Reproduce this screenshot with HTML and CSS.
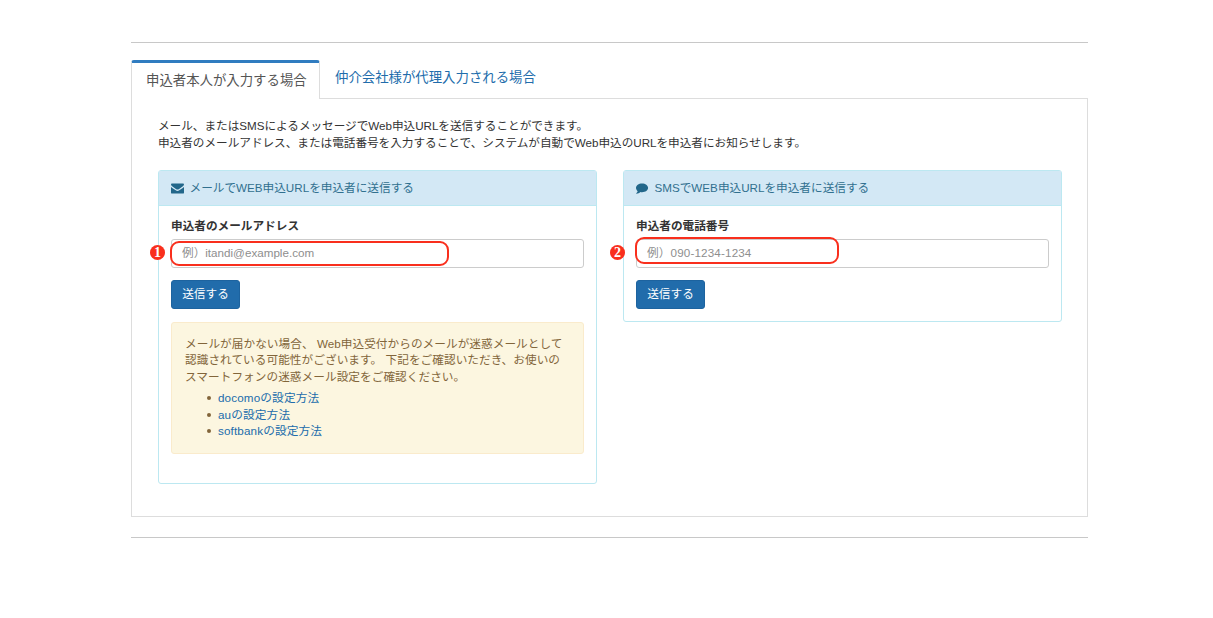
FILE: index.html
```html
<!DOCTYPE html>
<html lang="ja">
<head>
    <meta charset="UTF-8">
    <meta name="viewport" content="width=device-width, initial-scale=1.0">
    <title>Web申込</title>
    <link rel="stylesheet" href="styles.css">
</head>
<body>
    <div class="container">
        <hr class="divider">
        <ul class="tabs">
            <li class="tab active"><a href="#self">申込者本人が入力する場合</a></li>
            <li class="tab"><a href="#agent">仲介会社様が代理入力される場合</a></li>
        </ul>
        <div class="tab-content" id="self">
            <p class="lead">メール、またはSMSによるメッセージでWeb申込URLを送信することができます。<br>申込者のメールアドレス、または電話番号を入力することで、システムが自動でWeb申込のURLを申込者にお知らせします。</p>
            <div class="row">
                <div class="panel panel-mail">
                    <div class="panel-heading">
                        <svg class="icon" viewBox="0 0 14 14">
                            <path d="M1.200 1.600h11.600c.7 0 1.200.5 1.200 1.200 0 .8-.6 1.300-1.200 1.800L8.300 7.700c-.5.3-.8.5-1.300.5s-.8-.2-1.300-.5L1.200 4.600C.6 4.100 0 3.600 0 2.800c0-.7.5-1.200 1.200-1.200z"/>
                            <path d="M0 5.500c.3.300.6.500.9.700l4.200 2.800c.6.400 1.200.7 1.900.7s1.300-.3 1.900-.7l4.200-2.800c.3-.2.600-.4.900-.7v5.700c0 .8-.5 1.300-1.300 1.300H1.300c-.8 0-1.300-.5-1.300-1.300z"/>
                        </svg>
                        <span>メールでWEB申込URLを申込者に送信する</span>
                    </div>
                    <form class="panel-body">
                        <label for="email">申込者のメールアドレス</label>
                        <div class="field">
                            <input type="text" id="email" placeholder="例）itandi@example.com">
                            <span class="marker marker-mail"></span>
                            <span class="badge badge-mail">1</span>
                        </div>
                        <button type="button">送信する</button>
                        <div class="alert">
                            <p>メールが届かない場合、 Web申込受付からのメールが迷惑メールとして<br>認識されている可能性がございます。 下記をご確認いただき、お使いの<br>スマートフォンの迷惑メール設定をご確認ください。</p>
                            <ul>
                                <li><a href="#">docomoの設定方法</a></li>
                                <li><a href="#">auの設定方法</a></li>
                                <li><a href="#">softbankの設定方法</a></li>
                            </ul>
                        </div>
                    </form>
                </div>
                <div class="panel panel-sms">
                    <div class="panel-heading">
                        <svg class="icon" viewBox="0 0 14 14">
                            <path d="M6.500 1.500c3.700 0 6.500 2.100 6.500 4.800S10.200 11.100 6.500 11.100c-.6 0-1.200 0-1.700-.2C3.500 12.100 2.100 12.500.6 12.700c-.3 0-.5-.3-.3-.6.700-.7 1.200-1.300 1.500-2.200C.7 9 0 7.700 0 6.300 0 3.600 2.800 1.500 6.500 1.500z"/>
                        </svg>
                        <span>SMSでWEB申込URLを申込者に送信する</span>
                    </div>
                    <form class="panel-body">
                        <label for="tel">申込者の電話番号</label>
                        <div class="field">
                            <input type="text" id="tel" placeholder="例）090-1234-1234">
                            <span class="marker marker-sms"></span>
                            <span class="badge badge-sms">2</span>
                        </div>
                        <button type="button">送信する</button>
                    </form>
                </div>
            </div>
        </div>
        <hr class="divider">
    </div>
</body>
</html>
```
FILE: styles.css
```css
* {
    box-sizing: border-box;
}
body {
    margin: 0;
    background: #fff;
    color: #333;
    font-family: "Liberation Sans", "Noto Sans CJK JP", sans-serif;
    font-size: 11.65px;
    line-height: 16.7px;
}
a {
    color: #216cab;
    text-decoration: none;
}
.container {
    width: 957px;
    margin-left: 131px;
    padding-top: 42px;
}
.divider {
    height: 1px;
    margin: 0;
    border: none;
    background: #c8c8c8;
}
.tabs {
    display: flex;
    align-items: flex-start;
    height: 38px;
    margin: 17px 0 0;
    padding: 0;
    list-style: none;
    font-size: 13.4px;
}
.tab {
    height: 38px;
    padding: 10px 15px 0;
}
.tab.active {
    position: relative;
    width: 189px;
    height: 39px;
    padding: 10px 0 0 14px;
    background: #fff;
    border: 1px solid #ddd;
    border-top: 3px solid #307cc0;
    border-bottom: none;
    border-radius: 3px 3px 0 0;
    white-space: nowrap;
}
.tab.active a {
    color: #555;
}
.tab-content {
    height: 419px;
    padding: 19px 26px 0;
    border: 1px solid #ddd;
    margin-bottom: 20px;
}
.lead {
    margin: 0 0 18.600px;
    letter-spacing: -0.03px;
    white-space: nowrap;
}
.row {
    display: flex;
    align-items: flex-start;
    gap: 26px;
}
.panel {
    flex: none;
    width: 439px;
    border: 1px solid #bce8f1;
    border-radius: 3px;
}
.panel-mail {
    height: 314px;
}
.panel-sms {
    height: 152px;
}
.panel-heading {
    display: flex;
    align-items: center;
    gap: 5.500px;
    height: 35px;
    padding-left: 12px;
    background: #d3e8f5;
    border-bottom: 1px solid #bce8f1;
    color: #31708f;
}
.icon {
    width: 13px;
    height: 13px;
    fill: #22678a;
}
.panel-body {
    padding: 12px 12px 0;
}
label {
    display: block;
    margin-bottom: 4px;
    font-weight: bold;
}
.field {
    position: relative;
}
input {
    display: block;
    width: 100%;
    height: 29px;
    padding: 0 10px 2px;
    border: 1px solid #ccc;
    border-radius: 3px;
    font: inherit;
}
input::placeholder {
    color: #8e8e8e;
    opacity: 1;
}
#tel {
    letter-spacing: 0.15px;
}
/* red callouts over the input fields */
.marker {
    position: absolute;
    left: -1px;
    border: 2px solid #f92f1d;
    border-radius: 9px;
}
.marker-mail {
    top: 2px;
    width: 279px;
    height: 25px;
}
.marker-sms {
    top: -2px;
    width: 204px;
    height: 27px;
}
.badge {
    position: absolute;
    top: 6px;
    width: 15px;
    height: 15px;
    border-radius: 50%;
    background: #f92f1d;
    color: #fff;
    font-family: "Liberation Serif", serif;
    font-size: 14px;
    font-weight: bold;
    line-height: 15px;
    text-align: center;
}
.badge-mail {
    left: -21px;
}
.badge-sms {
    left: -26px;
}
button {
    display: block;
    width: 69px;
    height: 29px;
    margin-top: 12px;
    padding: 0;
    border: 1px solid #1d639f;
    border-radius: 3px;
    background: #216cab;
    color: #fff;
    font: inherit;
}
.alert {
    height: 132px;
    margin-top: 13px;
    padding: 12.800px 0 0 13px;
    border: 1px solid #faebcc;
    border-radius: 3px;
    background: #fcf6e0;
    color: #82653a;
    letter-spacing: 0.05px;
    white-space: nowrap;
}
.alert p {
    margin: 0;
}
.alert ul {
    margin: 4.400px 0 0;
    padding-left: 33px;
    list-style: none;
}
.alert li::before {
    content: "";
    display: inline-block;
    width: 4px;
    height: 4px;
    margin: 0 7px 2px -11px;
    border-radius: 50%;
    background: #82653a;
}
.alert li a {
    letter-spacing: 0.15px;
}
```
